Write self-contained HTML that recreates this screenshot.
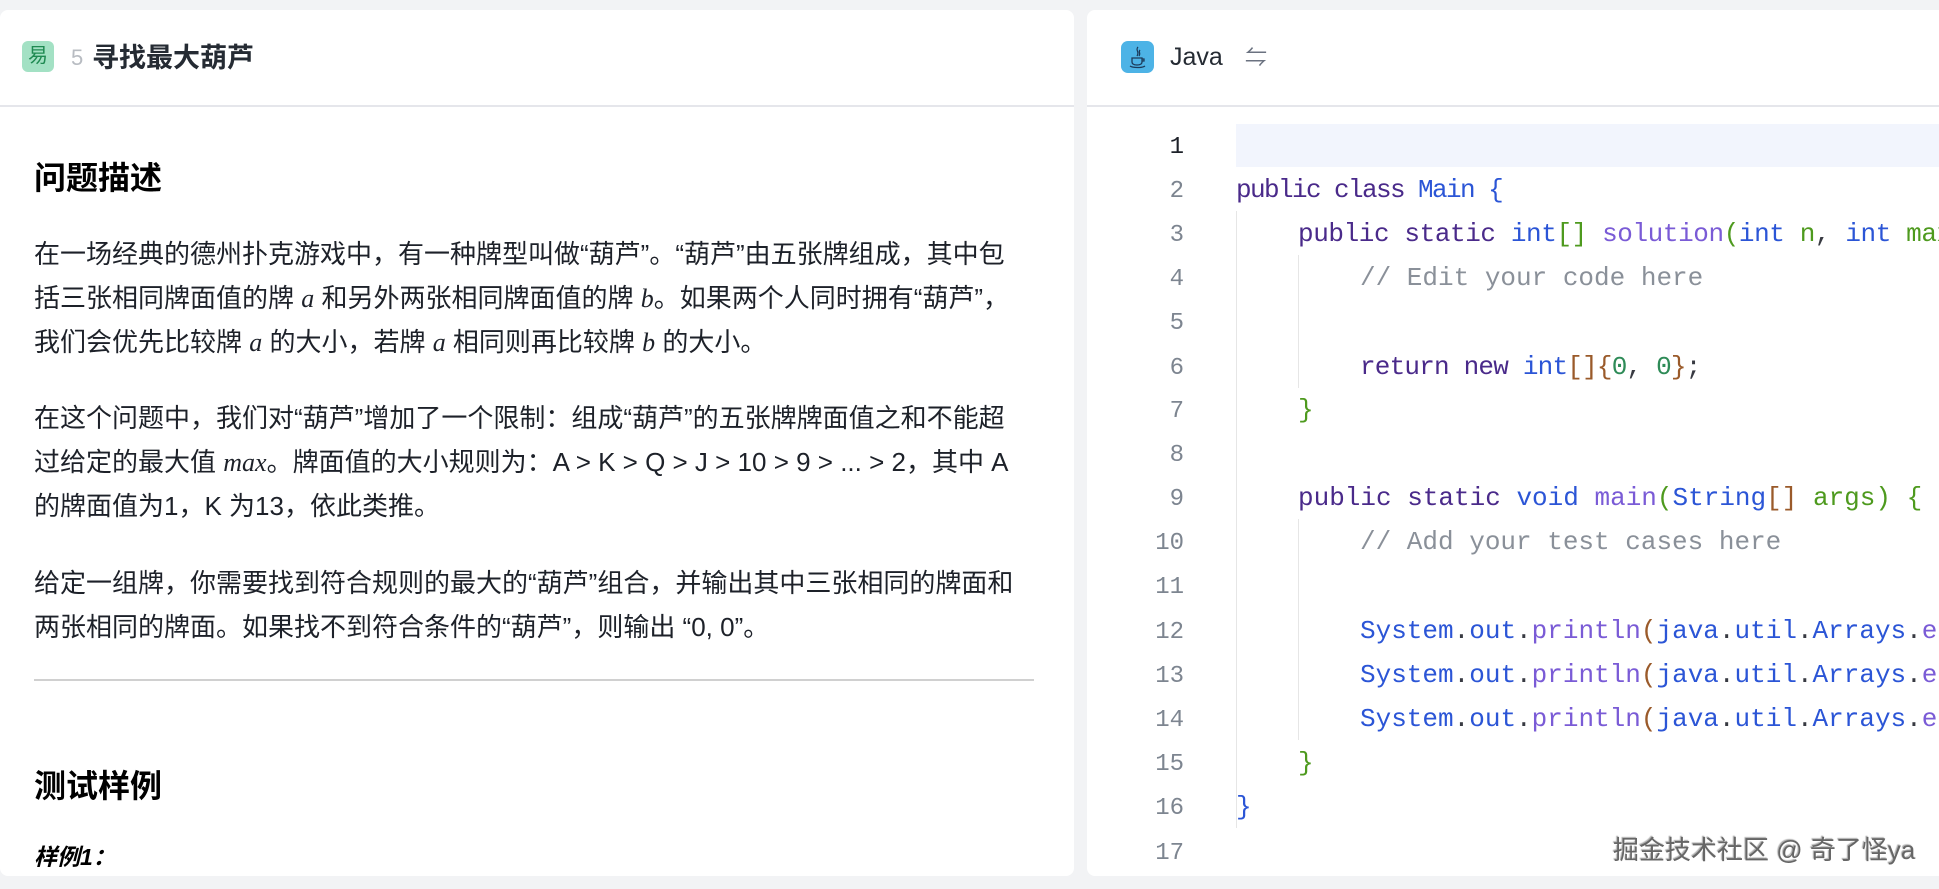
<!DOCTYPE html>
<html><head><meta charset="utf-8"><style>
*{margin:0;padding:0;box-sizing:border-box}
body{width:1939px;height:889px;background:#f2f3f5;overflow:hidden;position:relative;font-family:"Liberation Sans","Noto Sans CJK SC",sans-serif;color:#1d2129}
.panel{position:absolute;background:#fff;border-radius:8px;overflow:hidden}
#L{left:0;top:10px;width:1074px;height:866px}
#R{left:1087px;top:10px;width:860px;height:866px}
.hd{position:absolute;left:0;top:0;right:0;height:97px;border-bottom:2px solid #e5e6eb}
.t{position:absolute;white-space:nowrap}
.body{font-size:26px;line-height:26px}
.m{font-family:"Liberation Serif",serif;font-style:italic}
.ln{position:absolute;width:60px;left:1124px;text-align:right;color:#7d8590;font-family:"Liberation Mono",monospace;font-size:24px}
.cl{position:absolute;left:1236px;font-family:"Liberation Mono",monospace;font-size:26px;white-space:pre;color:#383a42}
.kw{color:#4a2a8a}.ty{color:#2b55d6}.fn{color:#7a5bd6}.gr{color:#4e9a1e}.br{color:#9a5a2a}.cm{color:#8a9099}.tl{color:#2e8b57}
.g{position:absolute;width:1px;background:#e6e6e6}
</style></head><body>
<div class="panel" id="L"><div class="hd"></div></div>
<div class="panel" id="R"><div class="hd"></div></div>

<div class="t" style="left:22px;top:41px;width:32px;height:31px;background:#a3e1c4;border-radius:6px;color:#1f8a52;font-size:20px;line-height:31px;text-align:center">易</div>
<div class="t" style="left:71px;top:44px;font-size:22px;line-height:28px;color:#b8bcc2">5</div>
<div class="t" style="left:92px;top:42px;font-size:27px;line-height:32px;font-weight:bold;color:#252b33">寻找最大葫芦</div>

<div class="t" style="left:34px;top:161px;font-size:32px;line-height:34px;font-weight:bold;color:#000">问题描述</div>
<div class="t body" style="left:34px;top:241px">在一场经典的德州扑克游戏中，有一种牌型叫做“葫芦”。“葫芦”由五张牌组成，其中包</div>
<div class="t body" style="left:34px;top:285px">括三张相同牌面值的牌 <span class="m">a</span> 和另外两张相同牌面值的牌 <span class="m">b</span>。如果两个人同时拥有“葫芦”，</div>
<div class="t body" style="left:34px;top:329px">我们会优先比较牌 <span class="m">a</span> 的大小，若牌 <span class="m">a</span> 相同则再比较牌 <span class="m">b</span> 的大小。</div>
<div class="t body" style="left:34px;top:405px">在这个问题中，我们对“葫芦”增加了一个限制：组成“葫芦”的五张牌牌面值之和不能超</div>
<div class="t body" style="left:34px;top:449px">过给定的最大值 <span class="m">max</span>。牌面值的大小规则为：A &gt; K &gt; Q &gt; J &gt; 10 &gt; 9 &gt; ... &gt; 2，其中 A</div>
<div class="t body" style="left:34px;top:493px">的牌面值为1，K 为13，依此类推。</div>
<div class="t body" style="left:34px;top:570px">给定一组牌，你需要找到符合规则的最大的“葫芦”组合，并输出其中三张相同的牌面和</div>
<div class="t body" style="left:34px;top:614px">两张相同的牌面。如果找不到符合条件的“葫芦”，则输出 “0, 0”。</div>
<div style="position:absolute;left:34px;top:679px;width:1000px;height:2px;background:#d0d0d0"></div>
<div class="t" style="left:34px;top:769px;font-size:32px;line-height:34px;font-weight:bold;color:#000">测试样例</div>
<div class="t" style="left:34px;top:844px;font-size:23px;line-height:26px;font-weight:bold;font-style:italic;color:#000">样例1：</div>

<div class="t" style="left:1121px;top:41px;width:33px;height:32px;background:#4db3e6;border-radius:7px"><svg width="33" height="32" viewBox="0 0 33 32"><path d="M17 6c-3 3 2 5-1 9M19 9c-2 2 1 3-1 6M11 17h10v4c0 2-2 3-5 3s-5-1-5-3zM21 18h2v2h-2M9 25c3 2 12 2 15 0" fill="none" stroke="#1c3a5a" stroke-width="1.3"/></svg></div>
<div class="t" style="left:1170px;top:43px;font-size:25px;line-height:28px;color:#252b33">Java</div>
<div class="t" style="left:1245px;top:44px;font-size:22px;line-height:28px;color:#6b7280">⇋</div>

<div style="position:absolute;left:1236px;top:124px;width:710px;height:43px;background:#f2f5fd"></div>
<div class="g" style="left:1236px;top:211px;height:617px"></div>
<div class="g" style="left:1298px;top:255px;height:133px"></div>
<div class="g" style="left:1298px;top:519px;height:221px"></div>

<div class="ln" style="top:134px;color:#1d2129">1</div>
<div class="ln" style="top:178px">2</div>
<div class="ln" style="top:222px">3</div>
<div class="ln" style="top:266px">4</div>
<div class="ln" style="top:310px">5</div>
<div class="ln" style="top:355px">6</div>
<div class="ln" style="top:398px">7</div>
<div class="ln" style="top:442px">8</div>
<div class="ln" style="top:486px">9</div>
<div class="ln" style="top:530px">10</div>
<div class="ln" style="top:574px">11</div>
<div class="ln" style="top:619px">12</div>
<div class="ln" style="top:663px">13</div>
<div class="ln" style="top:707px">14</div>
<div class="ln" style="top:751px">15</div>
<div class="ln" style="top:795px">16</div>
<div class="ln" style="top:840px">17</div>

<div class="cl" style="top:175px;letter-spacing:-1.6px"><span class="kw">public class</span> <span class="ty">Main</span> <span class="ty">{</span></div>
<div class="cl" style="top:219px;left:1298px;letter-spacing:-0.4px"><span class="kw">public static</span> <span class="ty">int</span><span class="gr">[]</span> <span class="fn">solution</span><span class="gr">(</span><span class="ty">int</span> <span class="gr">n</span>, <span class="ty">int</span> <span class="gr">max</span></div>
<div class="cl" style="top:263px;left:1360px"><span class="cm">// Edit your code here</span></div>
<div class="cl" style="top:352px;left:1360px;letter-spacing:-0.8px"><span class="kw">return new</span> <span class="ty">int</span><span class="br">[]{</span><span class="tl">0</span>, <span class="tl">0</span><span class="br">}</span>;</div>
<div class="cl" style="top:395px;left:1298px"><span class="gr">}</span></div>
<div class="cl" style="top:483px;left:1298px"><span class="kw">public static</span> <span class="ty">void</span> <span class="fn">main</span><span class="gr">(</span><span class="ty">String</span><span class="br">[]</span> <span class="gr">args</span><span class="gr">)</span> <span class="gr">{</span></div>
<div class="cl" style="top:527px;left:1360px"><span class="cm">// Add your test cases here</span></div>
<div class="cl" style="top:616px;left:1360px"><span class="ty">System</span>.<span class="ty">out</span>.<span class="fn">println</span><span class="br">(</span><span class="ty">java</span>.<span class="ty">util</span>.<span class="ty">Arrays</span>.<span class="fn">equals</span></div>
<div class="cl" style="top:660px;left:1360px"><span class="ty">System</span>.<span class="ty">out</span>.<span class="fn">println</span><span class="br">(</span><span class="ty">java</span>.<span class="ty">util</span>.<span class="ty">Arrays</span>.<span class="fn">equals</span></div>
<div class="cl" style="top:704px;left:1360px"><span class="ty">System</span>.<span class="ty">out</span>.<span class="fn">println</span><span class="br">(</span><span class="ty">java</span>.<span class="ty">util</span>.<span class="ty">Arrays</span>.<span class="fn">equals</span></div>
<div class="cl" style="top:748px;left:1298px"><span class="gr">}</span></div>
<div class="cl" style="top:792px"><span class="ty">}</span></div>

<div class="t" style="left:1613px;top:836px;font-size:26px;line-height:28px;color:#666;font-weight:normal;text-shadow:1px 1px 1px #fff,-1px -1px 1px #aaa">掘金技术社区 @ 奇了怪ya</div>
</body></html>
